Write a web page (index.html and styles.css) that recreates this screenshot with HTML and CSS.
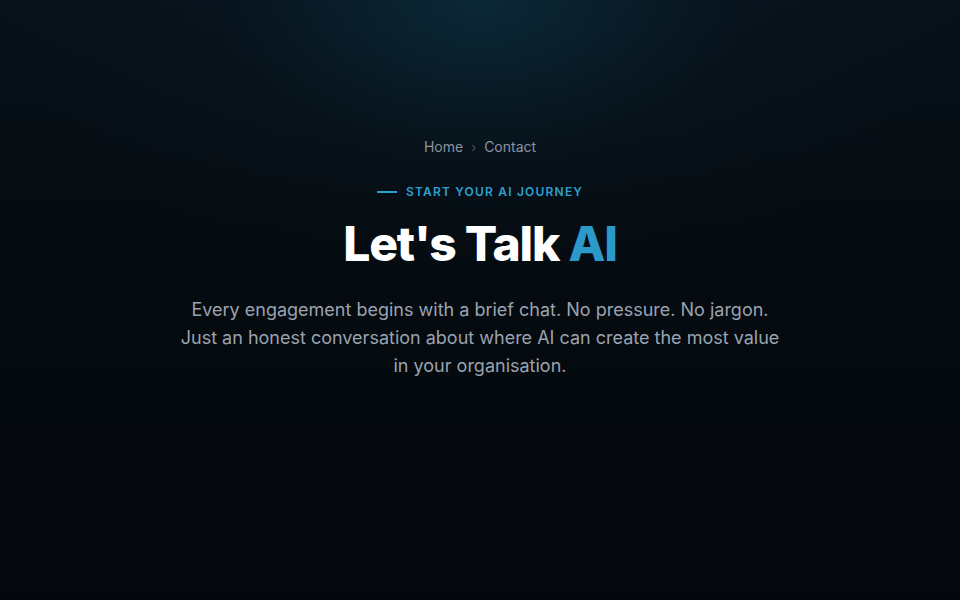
FILE: index.html
```html
<!DOCTYPE html>
<html lang="en">
<head>
<meta charset="utf-8">
<title>Contact</title>
<link rel="stylesheet" href="styles.css">
</head>
<body>
<section class="hero">
  <nav class="crumbs">
    <a href="#">Home</a>
    <span class="sep">›</span>
    <span class="current">Contact</span>
  </nav>
  <div class="eyebrow"><span class="dash"></span>START YOUR AI JOURNEY</div>
  <h1 class="title">Let's Talk <span class="accent">AI</span></h1>
  <p class="lead">Every engagement begins with a brief chat. No pressure. No jargon. Just an honest conversation about where AI can create the most value in your organisation.</p>
</section>
</body>
</html>
```

FILE: styles.css
```css
html, body {
  margin: 0;
  padding: 0;
  height: 100%;
}
body {
  background: #04080c;
  font-family: Inter, "Noto Sans", sans-serif;
  color: #e5e7eb;
}
.hero {
  height: 600px;
  box-sizing: border-box;
  padding-top: 138px;
  display: flex;
  flex-direction: column;
  align-items: center;
  text-align: center;
  background:
    radial-gradient(ellipse 480px 300px at 50% 0%, rgba(14, 58, 78, 0.55), rgba(10, 30, 42, 0.2) 55%, rgba(4, 8, 12, 0) 100%),
    linear-gradient(180deg, #07111a 0%, #050b10 40%, #04080c 100%);
}
.crumbs {
  display: flex;
  align-items: center;
  gap: 8px;
  font-size: 14px;
  line-height: 18px;
  color: #8a94a3;
}
.crumbs a {
  color: #8a94a3;
  text-decoration: none;
}
.crumbs .sep {
  color: #4b5563;
  font-size: 13px;
}
.eyebrow {
  margin-top: 28px;
  display: flex;
  align-items: center;
  gap: 9px;
  font-size: 12px;
  line-height: 16px;
  font-weight: 600;
  letter-spacing: 1.2px;
  color: #2f9fd0;
}
.dash {
  width: 20px;
  height: 2px;
  background: #2f9fd0;
}
.title {
  margin: 16px 0 0;
  font-size: 48px;
  line-height: 56px;
  font-weight: 800;
  letter-spacing: -1.2px;
  color: #ffffff;
}
.accent {
  color: #2b9acb;
}
.lead {
  margin: 24px 0 0;
  max-width: 610px;
  font-size: 18px;
  line-height: 28px;
  color: #9aa3b0;
}
```
